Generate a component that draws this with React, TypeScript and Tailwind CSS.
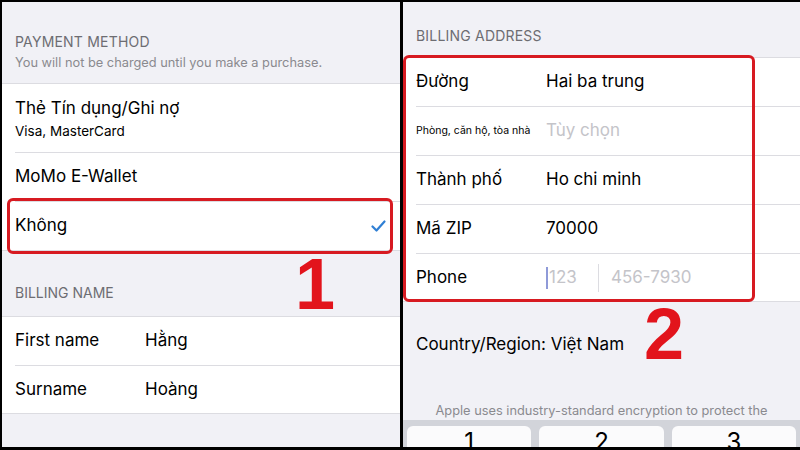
const FONT = { fontFamily: "Inter, 'Noto Sans', sans-serif" };

function Row({
  label,
  value,
  muted,
  small,
  last,
}: {
  label: string;
  value?: string;
  muted?: boolean;
  small?: boolean;
  last?: boolean;
}) {
  return (
    <div className="pl-[13px]">
      <div
        className={`flex items-center ${last ? "h-[47px]" : "h-[49px] border-b border-[#dcdce1]"}`}
      >
        <span
          className={`w-[130px] shrink-0 text-black ${small ? "text-[10.5px]" : "text-[17px]"}`}
        >
          {label}
        </span>
        {value && (
          <span className={`text-[17px] ${muted ? "text-[#c4c4c9]" : "text-black"}`}>
            {value}
          </span>
        )}
      </div>
    </div>
  );
}

function LeftPanel() {
  return (
    <div className="relative flex w-[398px] flex-col bg-[#f1f1f6]">
      <div className="px-[13px] pt-[31px] pb-[12px]">
        <div className="text-[14px] leading-[18px] tracking-[0.2px] text-[#6d6d72]">
          PAYMENT METHOD
        </div>
        <div className="mt-[4px] text-[12.8px] leading-[16px] text-[#8a8a8f]">
          You will not be charged until you make a purchase.
        </div>
      </div>
      <div className="border-y border-[#dcdce1] bg-white">
        <div className="pl-[13px]">
          <div className="flex h-[69px] flex-col justify-center border-b border-[#dcdce1]">
            <span className="text-[17px] leading-[22px] text-black">Thẻ Tín dụng/Ghi nợ</span>
            <span className="mt-[4px] text-[13.5px] leading-[17px] text-black">
              Visa, MasterCard
            </span>
          </div>
        </div>
        <Row label="MoMo E-Wallet" />
        <div className="pl-[13px]">
          <div className="flex h-[48px] items-center justify-between pr-[14px]">
            <span className="text-[17px] text-black">Không</span>
            <svg width="15" height="12" viewBox="0 0 15 12" fill="none">
              <path
                d="M1.5 6.5 L5.5 10.5 L13.5 1.5"
                stroke="#2f7fd4"
                strokeWidth="2.2"
                strokeLinecap="round"
                strokeLinejoin="round"
              />
            </svg>
          </div>
        </div>
      </div>
      <div className="px-[13px] pt-[33px] pb-[14px] text-[14px] leading-[18px] text-[#6d6d72]">
        BILLING NAME
      </div>
      <div className="border-y border-[#dcdce1] bg-white">
        <Row label="First name" value="Hằng" />
        <Row label="Surname" value="Hoàng" last />
      </div>

      {/* annotation */}
      <div className="pointer-events-none absolute left-[5px] top-[196px] h-[56px] w-[386px] rounded-[6px] border-[3px] border-[#d71a21]" />
      <span
        className="absolute left-[293px] top-[246px] text-[72px] font-bold leading-none text-[#e2141c]"
        style={{ fontFamily: "'Liberation Sans', Arial, sans-serif" }}
      >
        1
      </span>
    </div>
  );
}

function RightPanel() {
  return (
    <div className="relative flex flex-1 flex-col overflow-hidden bg-[#f1f1f6]">
      <div className="px-[13px] pt-[25px] pb-[12px] text-[14px] leading-[18px] tracking-[0.2px] text-[#6d6d72]">
        BILLING ADDRESS
      </div>
      <div className="border-y border-[#dcdce1] bg-white">
        <Row label="Đường" value="Hai ba trung" />
        <Row label="Phòng, căn hộ, tòa nhà" value="Tùy chọn" small muted />
        <Row label="Thành phố" value="Ho chi minh" />
        <Row label="Mã ZIP" value="70000" />
        <div className="pl-[13px]">
          <div className="flex h-[47px] items-center">
            <span className="w-[130px] shrink-0 text-[17px] text-black">Phone</span>
            <span className="relative flex w-[52px] items-center text-[17px] text-[#c4c4c9]">
              <span className="mr-[1px] h-[22px] w-[2px] bg-[#8f9ad8]" />
              123
            </span>
            <span className="mr-[12px] h-[28px] w-px bg-[#dcdce1]" />
            <span className="text-[17px] text-[#c4c4c9]">456-7930</span>
          </div>
        </div>
      </div>
      <div className="px-[13px] pt-[31px] text-[17px] leading-[22px] text-black">
        Country/Region: Việt Nam
      </div>
      <div className="mt-[48px] text-center text-[12.8px] leading-[16px] text-[#8a8a8f]">
        Apple uses industry-standard encryption to protect the
      </div>
      <div className="mt-[1px] flex flex-1 gap-[8px] bg-[#d2d4da] px-[4px] pt-[6px]">
        {["1", "2", "3"].map((k) => (
          <div
            key={k}
            className="flex flex-1 justify-center rounded-t-[6px] bg-[#fbfbfc] pt-[2px] text-[24px] leading-[28px] text-black"
          >
            {k}
          </div>
        ))}
      </div>

      {/* annotation */}
      <div className="pointer-events-none absolute left-0 top-[53px] h-[247px] w-[352px] rounded-[6px] border-[3px] border-[#d71a21]" />
      <span
        className="absolute left-[241px] top-[296px] text-[72px] font-bold leading-none text-[#e2141c]"
        style={{ fontFamily: "'Liberation Sans', Arial, sans-serif" }}
      >
        2
      </span>
    </div>
  );
}

export default function App() {
  return (
    <div
      className="flex h-[450px] w-[800px] gap-[3px] overflow-hidden bg-black pt-[2px] pb-[3px] pl-[2px]"
      style={FONT}
    >
      <LeftPanel />
      <RightPanel />
    </div>
  );
}
